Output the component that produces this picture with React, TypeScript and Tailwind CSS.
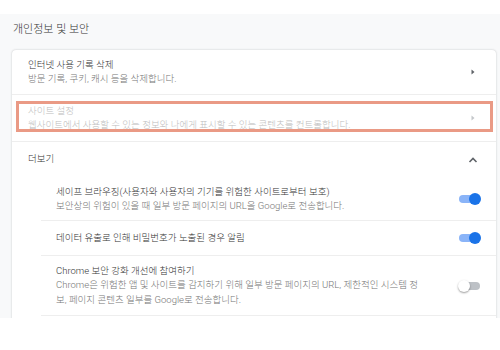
import React from "react";

const font = { fontFamily: 'Roboto, "Noto Sans CJK KR", sans-serif' };

const ArrowRight: React.FC<{ muted?: boolean }> = ({ muted }) => (
  <svg width="8" height="8" viewBox="0 0 8 8" aria-hidden="true">
    <path d="M2.5 1.5 L5.5 4 L2.5 6.5 Z" fill={muted ? "#c4c7ca" : "#5f6368"} />
  </svg>
);

const ChevronUp: React.FC = () => (
  <svg width="10" height="8" viewBox="0 0 10 8" aria-hidden="true">
    <path d="M1.5 6 L5 2.5 L8.5 6" fill="none" stroke="#5f6368" strokeWidth="1.6" />
  </svg>
);

const Toggle: React.FC<{ on?: boolean }> = ({ on }) => (
  <div className="relative w-[23px] h-[12px] flex items-center">
    <div className={`w-[21px] h-[8px] rounded-full ml-[1px] ${on ? "bg-[#8ab4f8]" : "bg-[#bdc1c6]"}`} />
    <div
      className={`absolute top-0 w-[12px] h-[12px] rounded-full ${
        on ? "right-0 bg-[#1a73e8]" : "left-0 bg-white shadow-[0_1px_2px_rgba(0,0,0,0.4)]"
      }`}
    />
  </div>
);

export default function App() {
  return (
    <div className="w-[500px] h-[350px] bg-white overflow-hidden font-light" style={font}>
      <div className="h-[14px]" />
      <div className="h-[304px] bg-[#f8f9fa] overflow-hidden">
        <div className="pl-[13px] pt-[9px] h-[36px] text-[11px] leading-[14px] text-[#333333]">
          개인정보 및 보안
        </div>
        <div className="ml-[12px] mr-[4px] bg-white rounded-[4px] shadow-[0_0_2px_rgba(60,64,67,0.3)]">
          {/* 인터넷 사용 기록 삭제 */}
          <div className="h-[45px] flex items-center pl-[16px] pr-[19px] border-b border-[#eeeeee]">
            <div className="flex-1 text-[9.5px] leading-[14px]">
              <div className="text-[#333333]">인터넷 사용 기록 삭제</div>
              <div className="text-[#757575]">방문 기록, 쿠키, 캐시 등을 삭제합니다.</div>
            </div>
            <ArrowRight />
          </div>

          {/* 사이트 설정 */}
          <div className="relative h-[47px] flex items-center pl-[16px] pr-[19px] border-b border-[#eeeeee]">
            <div className="flex-1 text-[9.5px] leading-[14.5px] text-[#bdbdbd]">
              <div>사이트 설정</div>
              <div>웹사이트에서 사용할 수 있는 정보와 나에게 표시할 수 있는 콘텐츠를 컨트롤합니다.</div>
            </div>
            <ArrowRight muted />
            <div className="absolute left-[4px] right-[3px] top-[6px] bottom-[9px] border-[3px] border-[#ea9a85]" />
          </div>

          {/* 더보기 */}
          <div className="h-[35px] flex items-center pl-[16px] pr-[18px]">
            <div className="flex-1 text-[9.5px] text-[#333333]">더보기</div>
            <ChevronUp />
          </div>

          <div className="pl-[29px]">
            <div className="h-[44px] flex items-center pl-[15px] pr-[15px] border-b border-[#eeeeee]">
              <div className="flex-1 text-[9.5px] leading-[14px]">
                <div className="text-[#333333]">세이프 브라우징(사용자와 사용자의 기기를 위험한 사이트로부터 보호)</div>
                <div className="text-[#757575]">보안상의 위험이 있을 때 일부 방문 페이지의 URL을 Google로 전송합니다.</div>
              </div>
              <Toggle on />
            </div>

            <div className="h-[35px] flex items-center pl-[15px] pr-[15px] border-b border-[#eeeeee]">
              <div className="flex-1 text-[9.5px] leading-[14px] text-[#333333]">
                데이터 유출로 인해 비밀번호가 노출된 경우 알림
              </div>
              <Toggle on />
            </div>

            <div className="h-[60px] flex items-center pl-[15px] pr-[15px] border-b border-[#eeeeee]">
              <div className="flex-1 text-[9.5px] leading-[14.5px]">
                <div className="text-[#333333]">Chrome 보안 강화 개선에 참여하기</div>
                <div className="text-[#757575] whitespace-nowrap">
                  Chrome은 위험한 앱 및 사이트를 감지하기 위해 일부 방문 페이지의 URL, 제한적인 시스템 정
                  <br />
                  보, 페이지 콘텐츠 일부를 Google로 전송합니다.
                </div>
              </div>
              <Toggle />
            </div>
          </div>
          <div className="h-[20px]" />
        </div>
      </div>
    </div>
  );
}
